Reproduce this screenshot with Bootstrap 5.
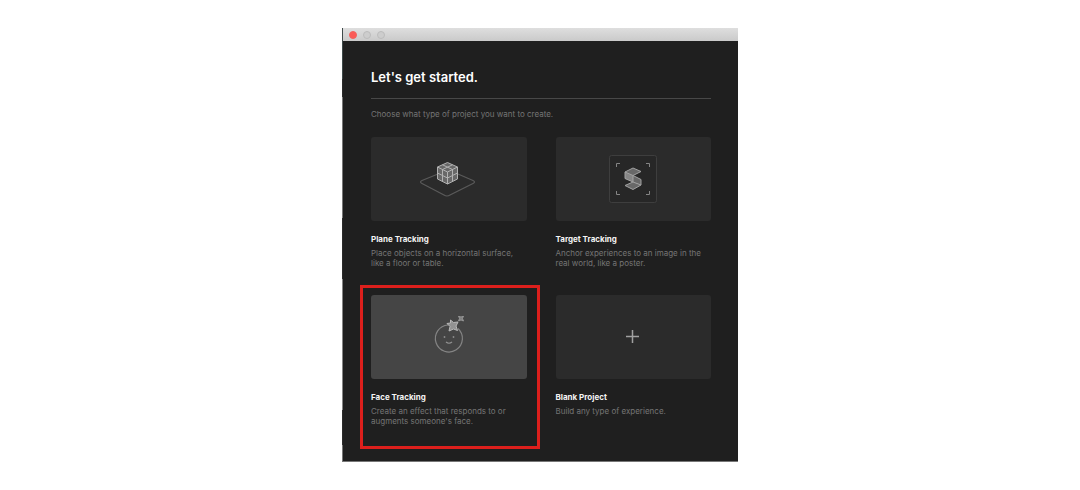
<!DOCTYPE html>
<html lang="en">
<head>
<meta charset="utf-8">
<meta name="viewport" content="width=device-width, initial-scale=1">
<title>Let's get started</title>
<link href="https://cdn.jsdelivr.net/npm/bootstrap@5.3.0/dist/css/bootstrap.min.css" rel="stylesheet">
<style>
  body { font-family: Inter, "Liberation Sans", sans-serif; font-size: 8px; line-height: 10px; background: #fff; padding: 28px 0; }
  .app-window { width: 100%; max-width: 396px; background: #1f1f1f; color: #757575; border-bottom: 1px solid #6a6a6a; border-left: 1px solid; border-image: linear-gradient(#3f4a4a 0 12%, #2b2b2b 12% 16%, #777 16% 44%, #2b2b2b 44% 58%, #858585 58% 88%, #2b2b2b 88% 96%, #777 96%) 1; }
  .title-bar { height: 13px; padding: 0 6px; gap: 6px; background: linear-gradient(#dedede, #cacaca); }
  .light { width: 8px; height: 8px; border: 1px solid #bcbcbc; background: #cdcdcd; }
  .light-close { background: #fb5a56; border-color: #f2625d; }
  .content { padding: 26px 27px 35px 28px; }
  .content h1 { font-size: 13px; line-height: 20px; font-weight: 600; color: #fff; }
  .rule { margin: 11px 0 10px; border-color: #484848; opacity: 1; }
  .tiles { display: grid; grid-template-columns: 1fr 1fr; gap: 27px 29px; margin-top: 18px; }
  .tile { color: inherit; }
  .thumb { height: 84px; border-radius: 3px; background: #2b2b2b; }
  .chosen .thumb { background: #454545; }
  .tile-name { font-size: 8px; line-height: 12px; font-weight: 700; color: #f4f4f4; margin: 12px 0 3px; }
  .marker { inset: -10px -13px -23px -11px; border: 3px solid #dc1f1c; pointer-events: none; }
</style>
</head>
<body>
<main class="app-window mx-auto">
  <div class="title-bar d-flex align-items-center">
    <button type="button" class="light light-close rounded-circle p-0" aria-label="Close"></button>
    <button type="button" class="light rounded-circle p-0" aria-label="Minimize"></button>
    <button type="button" class="light rounded-circle p-0" aria-label="Zoom"></button>
  </div>
  <div class="content">
    <h1 class="m-0">Let's get started.</h1>
    <hr class="rule">
    <p class="m-0">Choose what type of project you want to create.</p>
    <div class="tiles">
      <button type="button" class="tile d-flex flex-column border-0 bg-transparent p-0 text-start">
        <span class="thumb w-100 d-flex align-items-center justify-content-center">
          <svg width="60" height="44" viewBox="0 0 60 44" fill="none" aria-hidden="true">
            <path d="M19 17 3 23.500q-3 1.500 0 3L25 38q3 2 6 0L54 26.500q3-1.500 0-3L39 17" stroke="#5a5a5a" stroke-width="1.200"/>
            <path d="M28.500 5.500 18.500 10v12l10 5 10-5V10Z" fill="#686868"/>
            <path d="M28.500 5.500 18.500 10v12l10 5 10-5V10ZM18.500 10l10 5 10-5M28.500 15v12M23.500 7.800l10 4.700v12M33.500 7.800l-10 4.700v12M18.500 16l10 5 10-5" stroke="#b2b2b2" stroke-linejoin="round"/>
          </svg>
        </span>
        <span class="tile-name">Plane Tracking</span>
        <span>Place objects on a horizontal surface,<br>like a floor or table.</span>
      </button>
      <button type="button" class="tile d-flex flex-column border-0 bg-transparent p-0 text-start">
        <span class="thumb w-100 d-flex align-items-center justify-content-center">
          <svg width="50" height="50" viewBox="0 0 50 50" fill="none" aria-hidden="true">
            <rect x="1.500" y="1.500" width="47" height="47" rx="2" fill="#272727" stroke="#3e3e3e"/>
            <path d="M8.500 13V9.500H12M38 9.500h3.500V13M8.500 37v3.500H12M38 40.500h3.500V37" stroke="#858585"/>
            <path d="m25 14 8 3.500-8 4 8 4V31l-8 4.500-8-4 8-3.500-8-3.500v-6.500Z" fill="#686868"/>
            <path d="m17 18 8 3.500V28l-8-3.500Z" fill="#868686"/>
            <path d="m25 14 8 3.500-8 4 8 4V31l-8 4.500-8-4 8-3.500-8-3.500v-6.500ZM17 18l8 3.500V28l8 3" stroke="#a2a2a2" stroke-linejoin="round"/>
          </svg>
        </span>
        <span class="tile-name">Target Tracking</span>
        <span>Anchor experiences to an image in the<br>real world, like a poster.</span>
      </button>
      <button type="button" class="tile chosen position-relative d-flex flex-column border-0 bg-transparent p-0 text-start">
        <span class="thumb w-100 d-flex align-items-center justify-content-center">
          <svg width="32" height="42" viewBox="0 0 32 42" fill="none" aria-hidden="true">
            <path d="M15 9A13.500 13.500 0 1 0 25 12.500" stroke="#858585" stroke-width="1.200"/>
            <circle cx="11.500" cy="21" r=".9" fill="#8d8d8d"/><circle cx="20.500" cy="21" r=".9" fill="#8d8d8d"/>
            <path d="M13 26q3 2.500 6 0" stroke="#929292" stroke-width="1.200"/>
            <path d="m17.500 4 3 2.500 4.500-.5-2 4 1.500 4.500-4-1.500-4.500 2 1-4.500L14 7.500l3.500-.5Z" fill="#929292" stroke="#b8b8b8" stroke-linejoin="round"/>
            <path d="m25.500 0 2.500 1 2.500-1-1 2.500 1 2.500-2.500-1-2.500 1 1-2.500Z" fill="#808080" stroke="#a0a0a0" stroke-width=".8"/>
          </svg>
        </span>
        <span class="tile-name">Face Tracking</span>
        <span>Create an effect that responds to or<br>augments someone's face.</span>
        <span class="marker position-absolute"></span>
      </button>
      <button type="button" class="tile d-flex flex-column border-0 bg-transparent p-0 text-start">
        <span class="thumb w-100 d-flex align-items-center justify-content-center">
          <svg width="14" height="14" viewBox="0 0 14 14" aria-hidden="true"><path d="M6.500 0v13M0 6.500h13" stroke="#a0a0a0" stroke-width="1.500"/></svg>
        </span>
        <span class="tile-name">Blank Project</span>
        <span>Build any type of experience.</span>
      </button>
    </div>
  </div>
</main>
<script src="https://cdn.jsdelivr.net/npm/bootstrap@5.3.0/dist/js/bootstrap.bundle.min.js"></script>
</body>
</html>
